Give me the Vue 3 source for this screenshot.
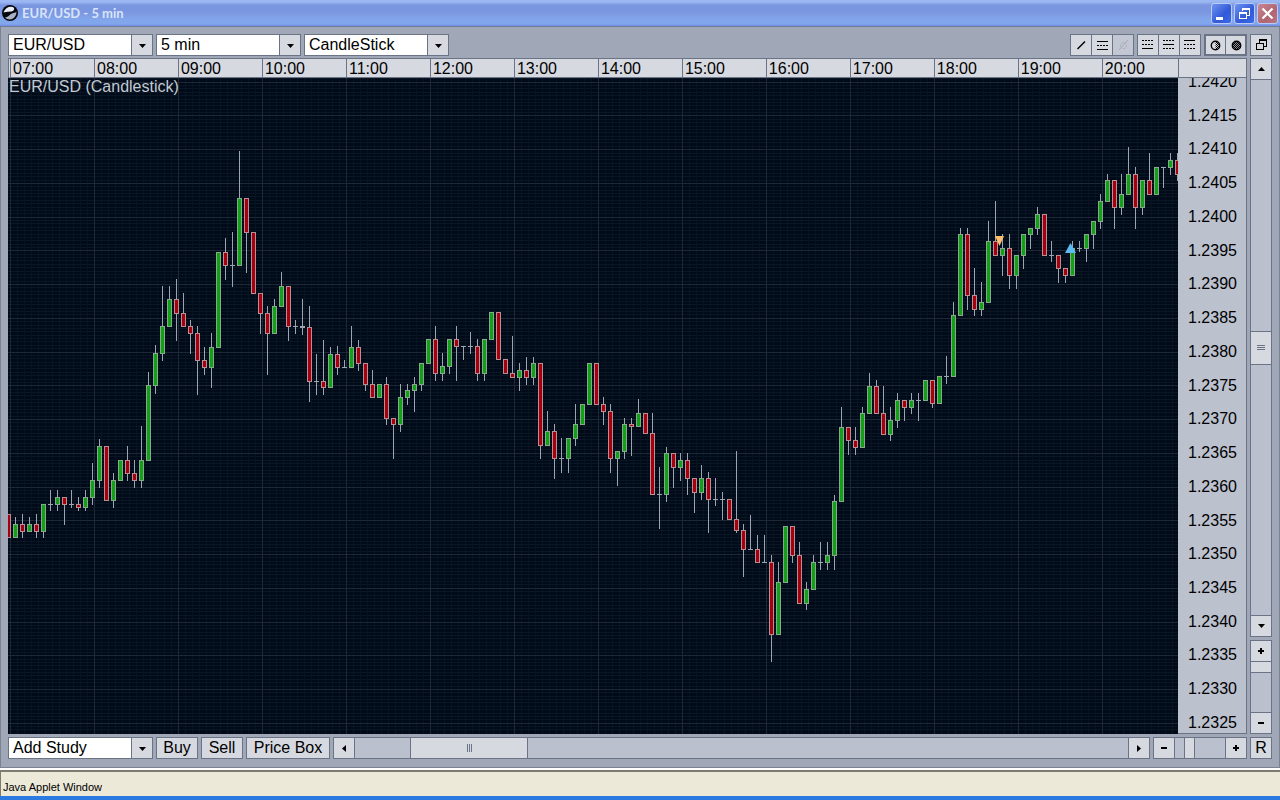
<template>
  <div class="window">
    <header class="titlebar">
      <svg class="logo" width="16" height="16" viewBox="0 0 16 16">
        <circle cx="8" cy="8" r="8" fill="#05070c" />
        <path d="M1.500 7.500C3 3.500 6 1.500 9.500 1.800C12 2 13 4 11.500 5.500C9.500 7.300 5 6.300 1.500 7.500Z" fill="#e8ecf4" />
        <path d="M3 12.500C6 12.500 7.500 9.500 10 8.500C12 7.800 14 8 14.300 6.500C15 10.500 11.500 14.500 8 14.500C6 14.500 4 13.800 3 12.500Z" fill="#aab2c2" />
      </svg>
      <h1 class="title">EUR/USD - 5 min</h1>
      <button class="win-btn" aria-label="Minimize">
        <svg width="19" height="19" viewBox="0 0 19 19"><rect x="4" y="13" width="7" height="3" fill="#fff" /></svg>
      </button>
      <button class="win-btn" aria-label="Restore">
        <svg width="19" height="19" viewBox="0 0 19 19" fill="none" stroke="#fff" shape-rendering="crispEdges">
          <path d="M7 7V4.500H14.500V11.500H12" />
          <path d="M7 5H15" stroke-width="2" />
          <rect x="4.500" y="8.500" width="7" height="6" />
          <path d="M4 9H12" stroke-width="2" />
        </svg>
      </button>
      <button class="win-btn close" aria-label="Close">
        <svg width="19" height="19" viewBox="0 0 19 19"><path d="M4.500 4.500L14.500 14.500M14.500 4.500L4.500 14.500" stroke="#fff" stroke-width="2.200" /></svg>
      </button>
    </header>

    <main class="panel">
      <div class="toolbar">
        <div v-for="s in topSelects" :key="s" class="combo">
          <select :aria-label="s"><option>{{ s }}</option></select>
          <svg class="combo-arrow" width="7" height="4" viewBox="0 0 7 4"><path d="M0 0H7L3.500 4Z" /></svg>
        </div>
        <div class="spacer"></div>
        <div class="group">
          <button class="tool" aria-label="Trend line">
            <svg width="20" height="20" viewBox="0 0 20 20"><path d="M6.500 14L14 6.500" stroke="#000" stroke-width="1.500" /></svg>
          </button>
          <button class="tool" aria-label="Horizontal lines">
            <svg width="20" height="20" viewBox="0 0 20 20" stroke="#000" shape-rendering="crispEdges">
              <path d="M5 6.500H16M5 14.500H16" /><path d="M5 10.500H16" stroke-dasharray="2 1" />
            </svg>
          </button>
          <button class="tool off" aria-label="Remove line" disabled>
            <svg width="20" height="20" viewBox="0 0 20 20" fill="none" stroke="#a3a9b8">
              <circle cx="10.500" cy="10.500" r="3" stroke-dasharray="2 1" /><path d="M6 15L15 5" />
            </svg>
          </button>
        </div>
        <div class="group">
          <button v-for="(g, i) in lineIcons" :key="i" class="tool" :aria-label="'Line style ' + (i + 1)">
            <svg width="20" height="20" viewBox="0 0 20 20" stroke="#000" shape-rendering="crispEdges">
              <path v-for="(solid, k) in g" :key="k" :d="`M4 ${5.5 + k * 4}H15`" :stroke-dasharray="solid ? 'none' : '2 1'" />
            </svg>
          </button>
        </div>
        <div class="group dark">
          <button v-for="n in 2" :key="n" class="tool" :aria-label="'Shade ' + n">
            <svg width="20" height="20" viewBox="0 0 20 20">
              <defs>
                <pattern :id="'dots' + n" width="2" height="2" patternUnits="userSpaceOnUse">
                  <path d="M0 0H1V1H0ZM1 1H2V2H1Z" fill="#000" />
                </pattern>
              </defs>
              <circle cx="10.500" cy="10.500" r="4.500" :fill="n === 2 ? '#8d919b' : '#d7d9e1'" />
              <path :d="n === 2 ? 'M10.500 6A4.500 4.500 0 0 0 10.500 15A4.500 4.500 0 0 0 10.500 6' : 'M10.500 6A4.500 4.500 0 0 1 10.500 15Z'" :fill="`url(#dots${n})`" />
              <circle cx="10.500" cy="10.500" r="4.200" fill="none" stroke="#000" stroke-width="1.400" />
            </svg>
          </button>
        </div>
        <div class="group">
          <button class="tool" aria-label="Detach">
            <svg width="20" height="20" viewBox="0 0 20 20" fill="#d7d9e1" stroke="#000" shape-rendering="crispEdges">
              <rect x="8.500" y="5.500" width="7" height="6" /><path d="M8 5H16" stroke-width="2" />
              <rect x="5.500" y="8.500" width="7" height="6" />
            </svg>
          </button>
        </div>
      </div>

      <div class="work">
        <section class="chart">
          <div class="times">
            <span v-for="t in times" :key="t" class="time">{{ t }}</span>
            <span class="corner"></span>
          </div>
          <div class="plot-row">
            <div class="plot">
              <svg class="canvas" viewBox="0 0 1170 656" preserveAspectRatio="none" shape-rendering="crispEdges">
                <rect width="1170" height="656" fill="#000a18" />
                <rect v-for="x in minorX" :key="'a' + x" :x="x" y="0" width="1" height="656" fill="#08131f" />
                <rect v-for="y in minorY" :key="'b' + y" x="0" :y="y" width="1170" height="1" fill="#091624" />
                <rect v-for="x in majorX" :key="'c' + x" :x="x" y="0" width="1" height="656" fill="#1c2836" />
                <rect v-for="y in majorY" :key="'d' + y" x="0" :y="y" width="1170" height="1" fill="#1c2836" />
                <g v-for="c in candles" :key="c.x">
                  <rect :x="c.x" :y="c.high" width="1" :height="c.low - c.high + 1" fill="#9da5b2" />
                  <rect :x="c.x - 2" :y="c.top" width="5" :height="c.bottom - c.top + 1" :fill="c.edge" />
                  <rect v-if="c.bottom - c.top > 1" :x="c.x - 1" :y="c.top + 1" width="3" :height="c.bottom - c.top - 1" :fill="c.fill" />
                </g>
                <path d="M987 158H996L991.500 168Z" fill="#ffbe6b" shape-rendering="auto" />
                <path d="M1057 175H1068L1062.500 165Z" fill="#5cbcf2" shape-rendering="auto" />
              </svg>
              <span class="caption">EUR/USD (Candlestick)</span>
            </div>
            <div class="axis">
              <div class="prices">
                <span v-for="p in prices" :key="p" class="price">{{ p }}</span>
              </div>
            </div>
          </div>
        </section>
        <aside class="side">
          <div class="bar vertical scroll">
            <button class="end" aria-label="Scroll up"><svg width="7" height="4" viewBox="0 0 7 4"><path d="M0 4H7L3.500 0Z" /></svg></button>
            <input type="range" aria-label="Vertical scroll" min="0" max="100" value="50">
            <button class="end" aria-label="Scroll down"><svg width="7" height="4" viewBox="0 0 7 4"><path d="M0 0H7L3.500 4Z" /></svg></button>
          </div>
          <div class="bar vertical zoom">
            <button class="end" aria-label="Zoom in"><svg width="6" height="6" viewBox="0 0 6 6"><path d="M0 2H2V0H4V2H6V4H4V6H2V4H0Z" /></svg></button>
            <input type="range" aria-label="Vertical zoom" min="0" max="40" value="0">
            <button class="end" aria-label="Zoom out"><svg width="6" height="2" viewBox="0 0 6 2"><rect width="6" height="2" /></svg></button>
          </div>
        </aside>
      </div>

      <div class="bottombar">
        <div class="combo">
          <select aria-label="Add Study"><option>Add Study</option></select>
          <svg class="combo-arrow" width="7" height="4" viewBox="0 0 7 4"><path d="M0 0H7L3.500 4Z" /></svg>
        </div>
        <button class="btn">Buy</button>
        <button class="btn">Sell</button>
        <button class="btn wide">Price Box</button>
        <div class="bar horizontal scroll">
          <button class="end" aria-label="Scroll left"><svg width="4" height="7" viewBox="0 0 4 7"><path d="M4 0V7L0 3.500Z" /></svg></button>
          <input type="range" aria-label="Horizontal scroll" min="0" max="655" value="55">
          <button class="end" aria-label="Scroll right"><svg width="4" height="7" viewBox="0 0 4 7"><path d="M0 0V7L4 3.500Z" /></svg></button>
        </div>
        <div class="bar horizontal zoom">
          <button class="end" aria-label="Zoom out"><svg width="6" height="2" viewBox="0 0 6 2"><rect width="6" height="2" /></svg></button>
          <input type="range" aria-label="Horizontal zoom" min="0" max="39" value="9">
          <button class="end" aria-label="Zoom in"><svg width="6" height="6" viewBox="0 0 6 6"><path d="M0 2H2V0H4V2H6V4H4V6H2V4H0Z" /></svg></button>
        </div>
        <button class="btn reset">R</button>
      </div>
    </main>

    <footer class="status">Java Applet Window</footer>
    <div class="taskbar"></div>
  </div>
</template>

<script setup>
const topSelects = ['EUR/USD', '5 min', 'CandleStick'];
const lineIcons = [[0, 0, 1], [0, 1, 0], [1, 0, 0]];
const times = Array.from({ length: 14 }, (_, i) => String(i + 7).padStart(2, '0') + ':00');
const prices = Array.from({ length: 20 }, (_, i) => (1.242 - i * 0.0005).toFixed(4));

// grid
const majorX = Array.from({ length: 14 }, (_, i) => 2 + i * 84);
const minorX = Array.from({ length: 167 }, (_, i) => 2 + i * 7);
const majorY = Array.from({ length: 20 }, (_, i) => Math.floor(4.2 + i * 33.74));
const minorY = Array.from({ length: 194 }, (_, i) => Math.floor(0.8 + i * 3.374));

// high top bottom low, g = up, r = down
const raw = `514 514 537 537 r,517 524 537 537 g,514 524 531 537 r,517 524 531 531 g,514 524 531 537 r,504 504 531 537 g,
490 504 504 510 d,490 497 504 510 g,497 497 504 524 r,490 504 504 507 d,497 504 507 510 r,490 497 507 510 g,
463 480 497 504 g,439 446 480 487 g,446 446 500 500 r,473 480 500 507 g,460 460 480 480 g,446 460 473 480 r,
460 473 480 487 r,426 460 480 487 g,372 385 460 460 g,345 353 385 393 g,286 326 353 360 g,286 299 326 326 g,
279 299 313 340 r,293 313 326 326 r,320 326 333 353 r,326 333 360 394 r,347 360 367 374 r,333 347 367 387 g,
252 252 347 347 g,238 252 265 279 r,232 265 265 286 d,151 198 265 265 g,198 198 232 272 r,232 232 293 293 r,
293 293 313 333 r,306 313 333 374 r,299 306 333 333 g,272 286 306 306 g,286 286 326 340 r,320 326 326 333 d,
299 326 327 334 d,306 327 381 401 r,354 381 381 394 d,340 381 387 394 r,347 354 387 387 g,346 354 367 374 r,
360 367 367 367 d,326 347 367 367 g,340 347 363 370 r,363 363 384 390 r,370 384 397 397 r,384 384 397 397 g,
377 384 418 424 r,418 418 424 458 r,384 397 424 431 g,384 390 397 404 g,377 384 390 411 g,363 363 384 390 g,
339 339 363 363 g,326 339 373 380 r,353 366 373 380 g,339 339 366 373 g,326 339 346 380 r,346 346 346 359 d,
332 346 346 353 d,339 346 373 380 r,339 339 373 380 g,312 312 339 339 g,312 312 359 359 r,359 359 373 373 r,
336 373 377 377 r,363 370 377 390 g,357 370 377 384 r,357 363 377 384 g,363 363 445 458 r,411 431 445 445 g,
424 431 458 478 r,438 458 458 472 d,438 438 458 472 g,404 424 438 445 g,404 404 424 424 g,363 363 404 404 g,
363 363 404 404 r,397 404 411 424 r,404 411 458 472 r,451 451 458 485 g,418 424 451 458 g,418 424 426 455 r,
399 413 426 426 g,413 413 433 433 r,413 433 494 494 r,467 494 494 528 d,447 453 494 501 g,453 453 467 487 r,
453 460 467 480 g,453 460 478 494 r,478 478 492 512 r,465 478 492 499 g,472 478 499 532 r,478 499 499 505 d,
492 499 499 519 d,499 499 519 519 r,451 519 530 532 r,524 530 549 576 r,515 549 549 549 d,535 549 562 562 r,
535 562 562 562 d,555 562 634 661 r,562 582 634 634 g,526 526 582 582 g,526 526 555 562 r,542 555 603 603 r,
582 589 603 609 g,555 562 589 589 g,542 562 562 569 d,542 555 562 569 g,495 501 555 569 g,407 427 501 501 g,
427 427 440 454 r,427 440 447 454 r,407 413 447 447 g,373 386 413 413 g,380 386 413 413 r,386 413 434 434 r,
407 420 434 440 g,393 400 420 427 g,400 400 407 420 r,393 400 407 413 g,393 400 400 420 d,380 380 400 400 g,
380 380 403 407 r,376 376 403 403 g,356 376 376 383 d,302 315 376 376 g,228 234 315 315 g,228 234 295 309 r,
268 295 309 315 r,282 302 309 315 g,221 241 302 302 g,201 241 255 255 r,234 248 255 275 g,234 248 275 288 r,
255 255 275 288 g,234 234 255 268 g,228 228 234 248 g,207 214 228 234 g,214 214 255 255 r,241 255 255 261 d,
255 255 268 282 r,268 268 275 282 r,241 248 275 275 g,241 248 248 251 d,234 234 248 261 g,221 221 234 248 g,
194 201 221 228 g,174 180 201 201 g,180 180 207 228 r,174 194 207 214 g,147 174 194 194 g,167 174 207 228 r,
180 180 207 214 g,153 180 194 194 r,167 167 194 194 g,167 167 167 187 d,153 160 167 174 g,153 160 174 180 r`;

const fills = { g: '#12a017', r: '#a6000f', d: '#9da5b2' };
const edges = { g: '#86a98e', r: '#b88f94', d: '#9da5b2' };

const candles = raw.split(',').map((row, i) => {
  const [high, top, bottom, low, kind] = row.trim().split(' ');
  return {
    x: i * 7,
    high: high - 78,
    top: top - 78,
    bottom: bottom - 78,
    low: low - 78,
    fill: fills[kind],
    edge: edges[kind]
  };
});
</script>

<style>
body {
  margin: 0;
}
</style>

<style scoped>
.window {
  display: flex;
  flex-direction: column;
  min-height: 100vh;
  font: 16px/20px "Liberation Sans", Arial, sans-serif;
  color: #000;
}
.window *, .window {
  box-sizing: border-box;
}
button, select, input {
  font: inherit;
  color: inherit;
  margin: 0;
  padding: 0;
  border-radius: 0;
}
svg {
  display: block;
}
.titlebar {
  display: flex;
  align-items: center;
  gap: 2px;
  height: 27px;
  padding: 0 2px;
  border-bottom: 1px solid #707a9a;
  background: linear-gradient(#9bb8f2 0, #9bb8f2 2px, #7b96e0 5px, #7b96e0 12px, #82a6ec 20px, #82a6ec 24px, #6f8be0 26px);
}
.title {
  flex: 1;
  margin: 0 0 0 2px;
  font: bold 13px/16px Lato, "Open Sans", sans-serif;
  color: #d8e4fa;
}
.win-btn {
  width: 21px;
  height: 21px;
  border: 1px solid #b9cbf5;
  border-radius: 3px;
  background: linear-gradient(135deg, #6f93f0, #3159d8 60%, #3c6ae6);
}
.win-btn.close {
  background: linear-gradient(135deg, #c78893, #b06572 60%, #bb7480);
}
.panel {
  flex: 1;
  display: flex;
  flex-direction: column;
  padding: 7px 7px 8px;
  border: solid #7b8292;
  border-width: 0 1px 1px;
  background: #a0a8b7;
}
.toolbar, .bottombar {
  display: flex;
  gap: 3px;
  height: 22px;
}
.toolbar {
  margin-bottom: 2px;
}
.bottombar {
  margin-top: 3px;
}
.spacer {
  flex: 1;
}
.combo {
  position: relative;
  width: 145px;
}
.combo select {
  width: 100%;
  height: 22px;
  padding: 0 24px 0 4px;
  border: 1px solid #6b7387;
  appearance: none;
  background: linear-gradient(to left, #d7d9e1 20px, #6b7387 20px, #6b7387 21px, #fff 21px);
}
.combo-arrow {
  position: absolute;
  right: 7px;
  top: 10px;
  pointer-events: none;
}
.group {
  display: flex;
  border: solid #6b7387;
  border-width: 1px 0 1px 1px;
}
.group.dark {
  outline: 1px solid #6b7387;
  outline-offset: -2px;
}
.tool {
  width: 21px;
  height: 20px;
  border: 0;
  border-right: 1px solid #6b7387;
  background: #d7d9e1;
}
.tool.off {
  background: #c2c7d3;
}
.work {
  flex: 1;
  display: flex;
  gap: 3px;
}
.chart {
  flex: 1;
  display: flex;
  flex-direction: column;
}
.times {
  display: flex;
  height: 20px;
  padding-left: 1px;
  border: 1px solid #6b7387;
  background: #d7d9e1;
  line-height: 19px;
}
.time {
  flex: 84 84 0;
  min-width: 0;
  padding-left: 2px;
  border-left: 1px solid #6b7387;
}
.time:nth-child(14) {
  flex-grow: 76;
}
.corner {
  width: 68px;
  border-left: 1px solid #6b7387;
}
.plot-row {
  flex: 1;
  display: flex;
}
.plot {
  flex: 1;
  position: relative;
  min-height: 400px;
}
.canvas {
  position: absolute;
  width: 100%;
  height: 100%;
}
.caption {
  position: absolute;
  left: 1px;
  top: -1px;
  color: #c3c9d3;
}
.axis {
  display: flex;
  width: 69px;
  overflow: hidden;
  border: solid #6b7387;
  border-width: 0 1px 1px 0;
  background: #bcc1ce;
}
.prices {
  flex: 1;
  display: flex;
  flex-direction: column;
  justify-content: space-between;
  margin-top: -6px;
  padding-left: 10px;
}
.side {
  display: flex;
  flex-direction: column;
  gap: 3px;
  width: 22px;
}
.bar {
  display: flex;
  border: 1px solid #6b7387;
  background: #bac0cd;
}
.vertical {
  flex-direction: column;
}
.vertical.scroll, .horizontal.scroll {
  flex: 1;
}
.vertical.zoom {
  height: 94px;
}
.horizontal.zoom {
  width: 94px;
}
.end {
  display: flex;
  align-items: center;
  justify-content: center;
  flex: none;
  width: 20px;
  height: 20px;
  border: 0;
  background: #d7d9e1;
  outline: 1px solid #6b7387;
}
.bar input {
  flex: 1;
  min-width: 0;
  min-height: 0;
  appearance: none;
  background: none;
}
.vertical input {
  writing-mode: vertical-lr;
  width: 20px;
  margin: 1px 0;
}
.horizontal input {
  height: 20px;
  margin: 0 1px;
}
.bar input::-webkit-slider-thumb {
  appearance: none;
  box-sizing: border-box;
  border: 0 solid #6b7387;
  background: #d7d9e1;
}
.vertical input::-webkit-slider-thumb {
  width: 20px;
  border-width: 1px 0;
}
.horizontal input::-webkit-slider-thumb {
  height: 20px;
  border-width: 0 1px;
}
.vertical.scroll input::-webkit-slider-thumb {
  height: 34px;
  background: repeating-linear-gradient(#6b7387 0 1px, #d7d9e1 1px 2px) center / 8px 5px no-repeat #d7d9e1;
}
.horizontal.scroll input::-webkit-slider-thumb {
  width: 118px;
  background: repeating-linear-gradient(to right, #6b7387 0 1px, #d7d9e1 1px 2px) center / 5px 8px no-repeat #d7d9e1;
}
.vertical.zoom input::-webkit-slider-thumb {
  height: 11px;
  border-top: 0;
}
.horizontal.zoom input::-webkit-slider-thumb {
  width: 11px;
}
.btn {
  width: 42px;
  border: 1px solid #6b7387;
  background: #d7d9e1;
}
.btn.wide {
  width: 84px;
}
.btn.reset {
  width: 22px;
}
.status {
  height: 26px;
  margin-top: 2px;
  padding: 6px 2px 0;
  border: solid #7d7a6f;
  border-width: 2px 0 0 1px;
  background: #ece9d8;
  font-size: 11px;
  line-height: 18px;
}
.taskbar {
  height: 4px;
  background: #2b7ae2;
}
</style>
